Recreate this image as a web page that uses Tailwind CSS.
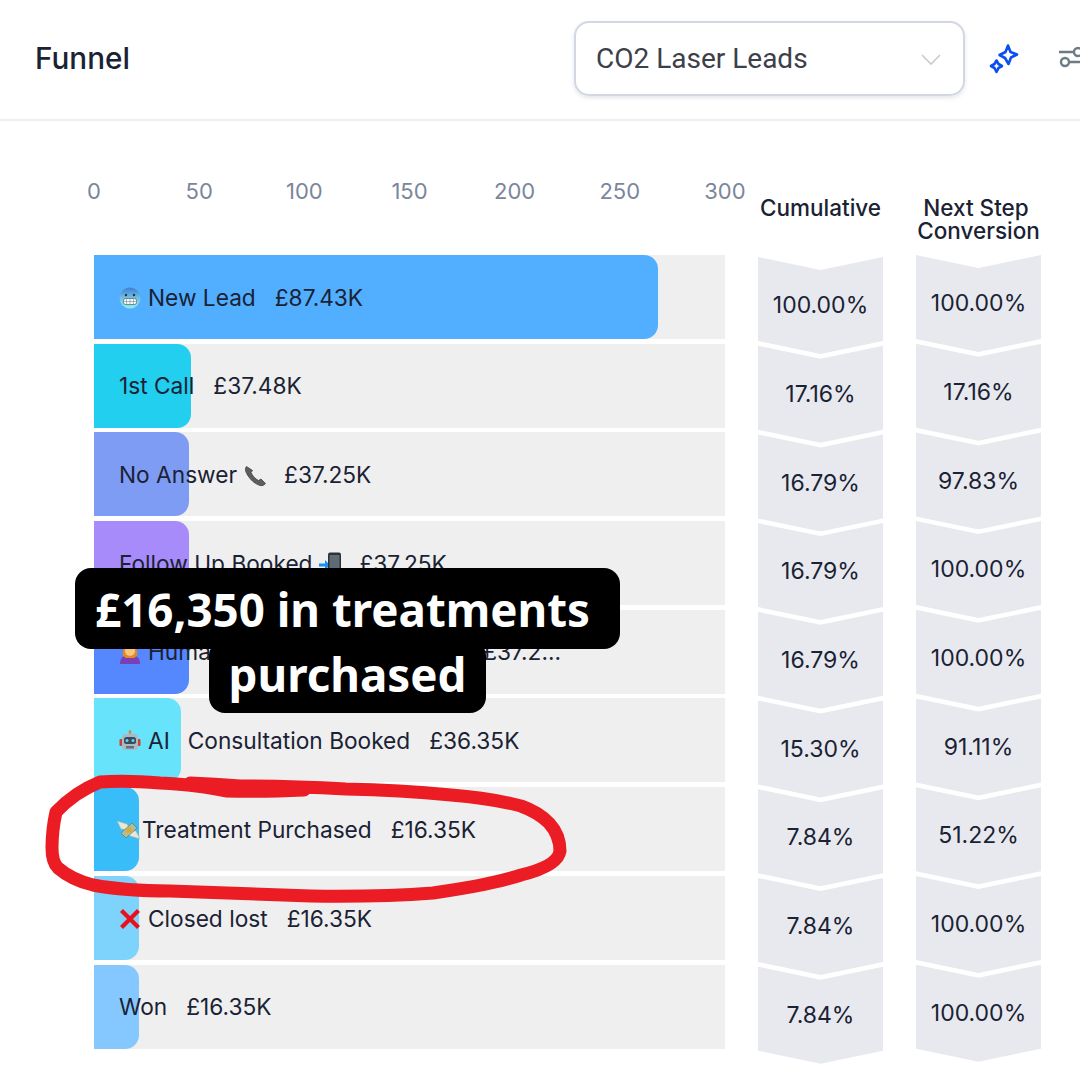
<!DOCTYPE html>
<html>
<head>
<meta charset="utf-8">
<script src="https://cdn.jsdelivr.net/npm/@tailwindcss/browser@4"></script>
</head>
<body class="bg-white">
<div class="relative w-[1080px] h-[1080px] overflow-hidden bg-white font-['Inter',sans-serif] text-[#1a2234]">
  <header class="h-[121px] border-b-2 border-[#eceef2] flex items-center pl-[35px] pb-[3px]">
    <h1 class="text-[29.7px] font-medium text-[#1a2234] w-[539px] shrink-0">Funnel</h1>
    <div class="w-[391px] h-[75px] shrink-0 rounded-[15px] border-2 border-[#d3d7e3] shadow-[0_2px_4px_rgba(100,110,140,0.18)] flex items-center justify-between pl-[20px] pr-[21px] pt-[2px] font-['Roboto',sans-serif] text-[28px] text-[#3c4048]">
      <span>CO2 Laser Leads</span>
      <svg width="22" height="14" viewBox="0 0 22 14" fill="none" stroke="#c9cbd1" stroke-width="1.6"><path d="M2 3l9 9 9-9"/></svg>
    </div>
    <svg class="ml-[23px] shrink-0" width="32" height="32" viewBox="0 0 32 32" fill="none" stroke="#0b4ff0" stroke-width="2.6" stroke-linejoin="round"><path d="M20 3.500 L22.500 10 L29 12.500 L23 15.500 L20.500 22 L17 16 L11.500 13 L17.500 10 Z"/><path d="M8.500 18.500 L10.500 22 L14 24 L10.500 26 L8.500 30 L6.500 26 L3 24 L6.500 22 Z"/></svg>
    <svg class="ml-[39px] shrink-0" width="24" height="24" viewBox="0 0 24 24" fill="none" stroke="#6b7c85" stroke-width="2.4"><path d="M0 6h15M11 16h13"/><circle cx="19" cy="6" r="4"/><circle cx="6" cy="16" r="4"/></svg>
  </header>

  <main class="flex items-start pl-[94px]">
    <section class="w-[631px]">
      <div class="flex justify-between h-[28px] mt-[56px] text-[22px] leading-[28px] text-[#7b869b]">
        <span class="w-0 flex justify-center">0</span>
        <span class="w-0 flex justify-center">50</span>
        <span class="w-0 flex justify-center">100</span>
        <span class="w-0 flex justify-center">150</span>
        <span class="w-0 flex justify-center">200</span>
        <span class="w-0 flex justify-center">250</span>
        <span class="w-0 flex justify-center">300</span>
      </div>
      <div class="mt-[50px] flex flex-col gap-[4.7px] text-[22.7px] whitespace-nowrap">
        <div class="grid h-[84px] bg-[#efefef]">
          <div class="col-start-1 row-start-1 w-[564px] rounded-r-[14px] bg-[#52aeff]"></div>
          <div class="col-start-1 row-start-1 flex items-center pl-[25px] pt-[1.5px]">
            <svg class="mr-[7px]" width="22" height="22" viewBox="0 0 22 22"><defs><linearGradient id="cold" x1="0" y1="0" x2="0" y2="1"><stop offset="0" stop-color="#3f7fd0"/><stop offset="0.5" stop-color="#6fc0e6"/><stop offset="1" stop-color="#8ff0ea"/></linearGradient></defs><circle cx="11" cy="11" r="10.500" fill="url(#cold)"/><rect x="4.500" y="11.500" width="13" height="6" rx="2" fill="#f4fbfb" stroke="#4d6270" stroke-width=".7"/><path d="M7.500 11.500v6M11 11.500v6M14.500 11.500v6M4.500 14.500h13" stroke="#7b8d99" stroke-width=".6"/><circle cx="7" cy="8" r="1.200" fill="#24324a"/><circle cx="15" cy="8" r="1.200" fill="#24324a"/></svg>
            <span>New Lead</span><span class="ml-[19px]">£87.43K</span>
          </div>
        </div>
        <div class="grid h-[84px] bg-[#efefef]">
          <div class="col-start-1 row-start-1 w-[97px] rounded-r-[14px] bg-[#22cfee]"></div>
          <div class="col-start-1 row-start-1 flex items-center pl-[25px] pt-[1.5px]">
            <span>1st Call</span><span class="ml-[19px]">£37.48K</span>
          </div>
        </div>
        <div class="grid h-[84px] bg-[#efefef]">
          <div class="col-start-1 row-start-1 w-[95px] rounded-r-[14px] bg-[#7f9cf5]"></div>
          <div class="col-start-1 row-start-1 flex items-center pl-[25px] pt-[1.5px]">
            <span>No Answer</span>
            <svg class="ml-[7px]" width="23" height="23" viewBox="0 0 23 23"><path d="M2.500 2.500 C1 4 1 7 3.500 11 C6.500 16 11 20 16 21.500 C18.500 22 20.500 21 21.500 19.500 L17 15 L14.500 16.500 C11.500 15 8.500 12 7 8.500 L8.500 6.500 Z" fill="#5e5e5e" stroke="#3f3f3f" stroke-width=".8"/></svg>
            <span class="ml-[17px]">£37.25K</span>
          </div>
        </div>
        <div class="grid h-[84px] bg-[#efefef]">
          <div class="col-start-1 row-start-1 w-[95px] rounded-r-[14px] bg-[#a78bfa]"></div>
          <div class="col-start-1 row-start-1 flex items-center pl-[25px] pt-[1.5px]">
            <span>Follow Up Booked</span>
            <svg class="ml-[6px]" width="24" height="24" viewBox="0 0 24 24"><path d="M0 11.500h6V8l5 5-5 5v-3.500H0z" fill="#1d8ff2"/><rect x="9" y="0.500" width="13" height="23" rx="2" fill="#2e3238"/><rect x="10.500" y="3" width="10" height="17" fill="#5d6b74"/></svg>
            <span class="ml-[17px]">£37.25K</span>
          </div>
        </div>
        <div class="grid h-[84px] bg-[#efefef]">
          <div class="col-start-1 row-start-1 w-[95px] rounded-r-[14px] bg-[#5588ff]"></div>
          <div class="col-start-1 row-start-1 flex items-center pl-[25px] pt-[1.5px]">
            <svg class="mr-[7px]" width="22" height="22" viewBox="0 0 22 22"><path d="M1 22 C1 15 5 13 11 13 C17 13 21 15 21 22Z" fill="#7b3fb5"/><path d="M4 14 C3 5 7 1 11 1 C15 1 19 5 18 14 L15 16 H7Z" fill="#e08a2a"/><circle cx="11" cy="9" r="5" fill="#f8c77e"/></svg>
            <span>Human Consultation Booked</span><span class="ml-[30px]">£37.2...</span>
          </div>
        </div>
        <div class="grid h-[84px] bg-[#efefef]">
          <div class="col-start-1 row-start-1 w-[87px] rounded-r-[14px] bg-[#67e3fb]"></div>
          <div class="col-start-1 row-start-1 flex items-center pl-[25px] pt-[1.5px]">
            <svg class="mr-[7px]" width="22" height="22" viewBox="0 0 22 22"><rect x="10" y="0.500" width="2" height="4" fill="#8a9aa5"/><circle cx="11" cy="1.800" r="1.500" fill="#e08a2a"/><rect x="0.500" y="9" width="3" height="7" rx="1" fill="#c8433a"/><rect x="18.500" y="9" width="3" height="7" rx="1" fill="#c8433a"/><rect x="3" y="4" width="16" height="16" rx="3.500" fill="#a9bac5"/><rect x="5" y="7" width="12" height="7" rx="2.500" fill="#3c4a57"/><circle cx="8" cy="10.500" r="1.500" fill="#5fd7f2"/><circle cx="14" cy="10.500" r="1.500" fill="#5fd7f2"/><rect x="7" y="16" width="8" height="2.500" fill="#5f7180"/></svg>
            <span>AI</span><span class="ml-[18px]">Consultation Booked</span><span class="ml-[19px]">£36.35K</span>
          </div>
        </div>
        <div class="grid h-[84px] bg-[#efefef]">
          <div class="col-start-1 row-start-1 w-[45px] rounded-r-[14px] bg-[#38bdf8]"></div>
          <div class="col-start-1 row-start-1 flex items-center pl-[23px] pt-[1.5px]">
            <svg class="mr-[2px]" width="23" height="22" viewBox="0 0 23 22"><path d="M0 2 L10 5 L13 11 L4 10Z" fill="#e6e8da" stroke="#aab09a" stroke-width=".6"/><path d="M23 20 L13 17 L10 11 L19 12Z" fill="#e6e8da" stroke="#aab09a" stroke-width=".6"/><path d="M4 14 L15 4 L20 9 L9 19Z" fill="#b3bd94" stroke="#6f7a58" stroke-width=".7"/><rect x="9.500" y="8.500" width="5" height="5" fill="#d9a83a"/></svg>
            <span>Treatment Purchased</span><span class="ml-[19px]">£16.35K</span>
          </div>
        </div>
        <div class="grid h-[84px] bg-[#efefef]">
          <div class="col-start-1 row-start-1 w-[45px] rounded-r-[14px] bg-[#7dd3fc]"></div>
          <div class="col-start-1 row-start-1 flex items-center pl-[25px] pt-[1.5px]">
            <svg class="mr-[7px]" width="22" height="22" viewBox="0 0 22 22"><path d="M2.500 2.500 L19.500 19.500 M19.500 2.500 L2.500 19.500" stroke="#e8101a" stroke-width="4.200"/></svg>
            <span>Closed lost</span><span class="ml-[19px]">£16.35K</span>
          </div>
        </div>
        <div class="grid h-[84px] bg-[#efefef]">
          <div class="col-start-1 row-start-1 w-[45px] rounded-r-[14px] bg-[#85c7ff]"></div>
          <div class="col-start-1 row-start-1 flex items-center pl-[25px] pt-[1.5px]">
            <span>Won</span><span class="ml-[19px]">£16.35K</span>
          </div>
        </div>
      </div>
    </section>

    <section class="ml-[33px] w-[125px] shrink-0 text-[23px]">
      <div class="mt-[75px] h-[61px] text-center text-[22.5px] leading-[23px] font-medium">Cumulative</div>
      <div class="flex flex-col">
        <div class="h-[97px] flex items-center justify-center bg-[#e8e9ef] [clip-path:polygon(0_0,50%_13px,100%_0,100%_84px,50%_100%,0_84px)]">100.00%</div>
        <div class="h-[97px] -mt-[8.3px] flex items-center justify-center bg-[#e8e9ef] [clip-path:polygon(0_0,50%_13px,100%_0,100%_84px,50%_100%,0_84px)]">17.16%</div>
        <div class="h-[97px] -mt-[8.3px] flex items-center justify-center bg-[#e8e9ef] [clip-path:polygon(0_0,50%_13px,100%_0,100%_84px,50%_100%,0_84px)]">16.79%</div>
        <div class="h-[97px] -mt-[8.3px] flex items-center justify-center bg-[#e8e9ef] [clip-path:polygon(0_0,50%_13px,100%_0,100%_84px,50%_100%,0_84px)]">16.79%</div>
        <div class="h-[97px] -mt-[8.3px] flex items-center justify-center bg-[#e8e9ef] [clip-path:polygon(0_0,50%_13px,100%_0,100%_84px,50%_100%,0_84px)]">16.79%</div>
        <div class="h-[97px] -mt-[8.3px] flex items-center justify-center bg-[#e8e9ef] [clip-path:polygon(0_0,50%_13px,100%_0,100%_84px,50%_100%,0_84px)]">15.30%</div>
        <div class="h-[97px] -mt-[8.3px] flex items-center justify-center bg-[#e8e9ef] [clip-path:polygon(0_0,50%_13px,100%_0,100%_84px,50%_100%,0_84px)]">7.84%</div>
        <div class="h-[97px] -mt-[8.3px] flex items-center justify-center bg-[#e8e9ef] [clip-path:polygon(0_0,50%_13px,100%_0,100%_84px,50%_100%,0_84px)]">7.84%</div>
        <div class="h-[97px] -mt-[8.3px] flex items-center justify-center bg-[#e8e9ef] [clip-path:polygon(0_0,50%_13px,100%_0,100%_84px,50%_100%,0_84px)]">7.84%</div>
      </div>
    </section>

    <section class="ml-[33px] w-[125px] shrink-0 text-[23px]">
      <div class="mt-[75px] h-[59px] -mx-[6px] text-center text-[22.5px] leading-[23px] font-medium"><span class="inline-block mr-[5px]">Next Step</span><br>Conversion</div>
      <div class="flex flex-col">
        <div class="h-[97px] flex items-center justify-center bg-[#e8e9ef] [clip-path:polygon(0_0,50%_13px,100%_0,100%_84px,50%_100%,0_84px)]">100.00%</div>
        <div class="h-[97px] -mt-[8.3px] flex items-center justify-center bg-[#e8e9ef] [clip-path:polygon(0_0,50%_13px,100%_0,100%_84px,50%_100%,0_84px)]">17.16%</div>
        <div class="h-[97px] -mt-[8.3px] flex items-center justify-center bg-[#e8e9ef] [clip-path:polygon(0_0,50%_13px,100%_0,100%_84px,50%_100%,0_84px)]">97.83%</div>
        <div class="h-[97px] -mt-[8.3px] flex items-center justify-center bg-[#e8e9ef] [clip-path:polygon(0_0,50%_13px,100%_0,100%_84px,50%_100%,0_84px)]">100.00%</div>
        <div class="h-[97px] -mt-[8.3px] flex items-center justify-center bg-[#e8e9ef] [clip-path:polygon(0_0,50%_13px,100%_0,100%_84px,50%_100%,0_84px)]">100.00%</div>
        <div class="h-[97px] -mt-[8.3px] flex items-center justify-center bg-[#e8e9ef] [clip-path:polygon(0_0,50%_13px,100%_0,100%_84px,50%_100%,0_84px)]">91.11%</div>
        <div class="h-[97px] -mt-[8.3px] flex items-center justify-center bg-[#e8e9ef] [clip-path:polygon(0_0,50%_13px,100%_0,100%_84px,50%_100%,0_84px)]">51.22%</div>
        <div class="h-[97px] -mt-[8.3px] flex items-center justify-center bg-[#e8e9ef] [clip-path:polygon(0_0,50%_13px,100%_0,100%_84px,50%_100%,0_84px)]">100.00%</div>
        <div class="h-[97px] -mt-[8.3px] flex items-center justify-center bg-[#e8e9ef] [clip-path:polygon(0_0,50%_13px,100%_0,100%_84px,50%_100%,0_84px)]">100.00%</div>
      </div>
    </section>
  </main>

  <svg class="absolute left-0 top-0 pointer-events-none" width="1080" height="1080" viewBox="0 0 1080 1080" fill="none" stroke="#ec1c24" stroke-width="13" stroke-linecap="round" stroke-linejoin="round"><path d="M304 790 Q260 792 226 791 Q200 785 160 783 Q125 780 100 782 Q75 792 56 812 Q52 830 52 848 Q52 862 58 868 Q72 880 93 885 Q125 891 170 891 L311 896 Q380 897 433 893 Q490 885 521 875 Q558 866 560 851 Q560 835 549 823 Q538 812 521 806 Q490 798 451 795 Q400 790 346 789 Q290 786 240 786 Q215 784 190 783"/></svg>

  <div class="absolute left-[75px] top-[568px] w-[545px] h-[81px] rounded-[16px] bg-black"></div>
  <div class="absolute left-[209px] top-[640px] w-[277px] h-[73px] rounded-[16px] bg-black"></div>
  <div class="absolute left-[75px] top-[568px] w-[545px] font-['Noto_Sans',sans-serif] font-bold text-white text-[45.7px] leading-[64px]">
    <div class="h-[81px] flex items-center pl-[20px]">£16,350 in treatments</div>
    <div class="h-[64px] -mt-[7px] flex items-center justify-center">purchased</div>
  </div>
</div>
</body>
</html>
